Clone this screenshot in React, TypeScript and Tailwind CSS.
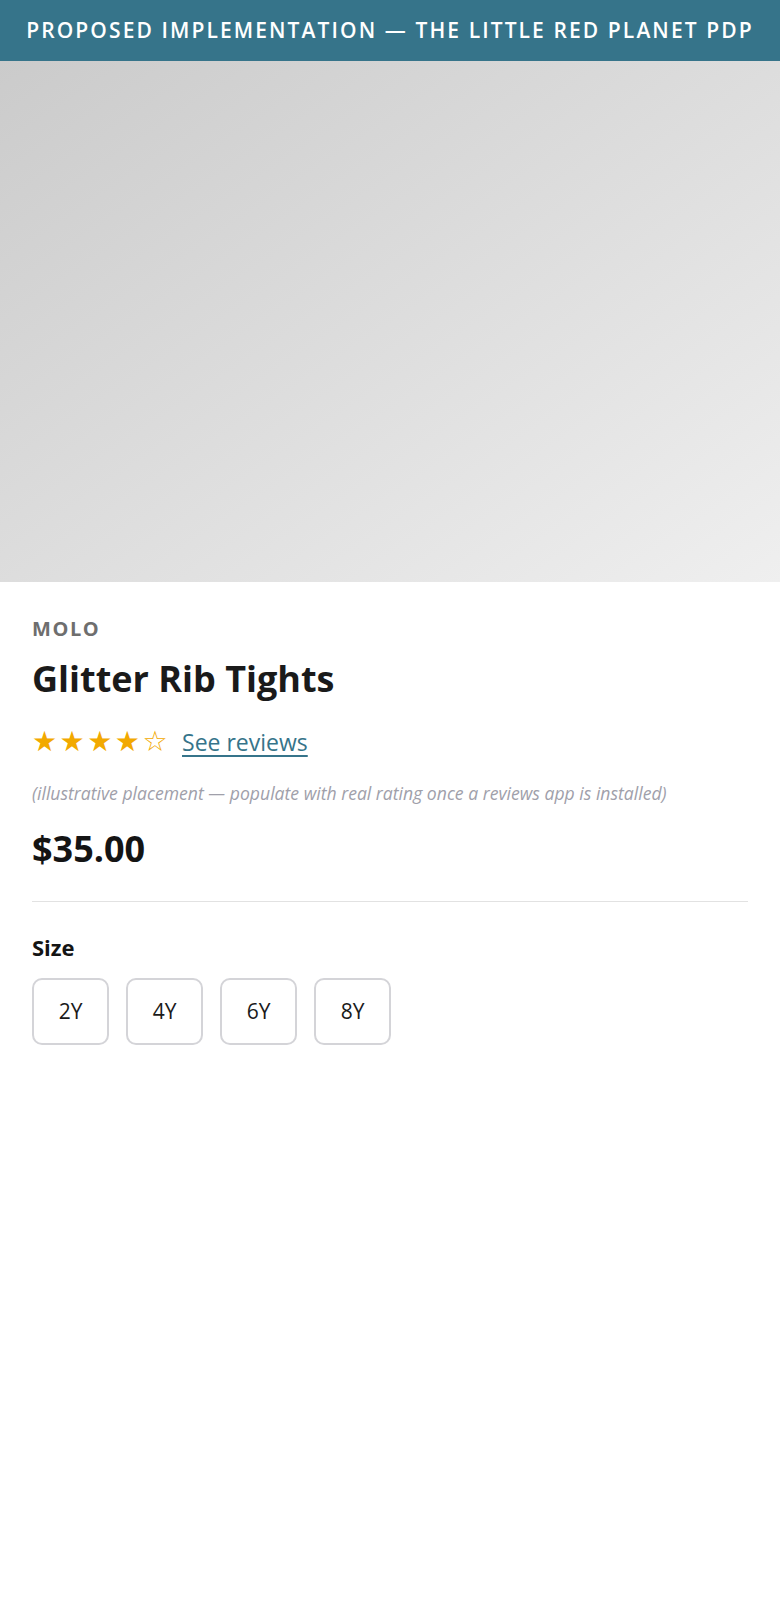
import React, { useState } from "react";

const sizes = ["2Y", "4Y", "6Y", "8Y"];

const App = () => {
  const [selected, setSelected] = useState<string | null>(null);

  return (
    <div className="min-h-[1600px] bg-white font-['Open_Sans',sans-serif] text-[#1a1a1a]">
      {/* Faixa do topo */}
      <header className="flex h-[61px] items-center justify-center bg-[#36748a]">
        <h1 className="text-[21px] font-semibold uppercase tracking-[0.1em] text-white">
          Proposed implementation — The Little Red Planet PDP
        </h1>
      </header>

      {/* Placeholder da foto do produto */}
      <div className="h-[521px] w-full bg-gradient-to-br from-[#cbcbcb] to-[#efefef]" />

      <section className="px-8 pt-[34px]">
        <p className="text-[20px] leading-[26px] font-bold uppercase tracking-[0.08em] text-[#6e6e6e]">
          Molo
        </p>
        <h2 className="mt-[15px] text-[36px] leading-[44px] font-bold text-[#1a1a1a]">
          Glitter Rib Tights
        </h2>

        <div className="mt-[26px] flex items-center gap-[12px]">
          <span className="font-['DejaVu_Sans',sans-serif] text-[28px] leading-[30px] tracking-[2.5px] text-[#f2a900]">
            ★★★★☆
          </span>
          <a
            href="#reviews"
            className="text-[23px] leading-[30px] text-[#36748a] underline underline-offset-[4px]"
          >
            See reviews
          </a>
        </div>

        <p className="mt-[24px] text-[17.6px] leading-[24px] italic text-[#a0a0aa]">
          (illustrative placement — populate with real rating once a reviews app is installed)
        </p>

        <p className="mt-[21px] text-[36px] leading-[46px] font-bold text-[#141414]">$35.00</p>

        <hr className="mt-[29px] border-t border-[#e2e2e2]" />

        <h3 className="mt-[31px] text-[22px] leading-[28px] font-bold text-[#141414]">Size</h3>
        <div className="mt-[17px] flex gap-[17px]">
          {sizes.map((s) => (
            <button
              key={s}
              onClick={() => setSelected(s)}
              className={
                selected === s
                  ? "flex h-[67px] w-[77px] items-center justify-center rounded-[10px] border-2 border-[#36748a] text-[21px] text-[#1a1a1a]"
                  : "flex h-[67px] w-[77px] items-center justify-center rounded-[10px] border-2 border-[#d4d4d8] text-[21px] text-[#1a1a1a]"
              }
            >
              {s}
            </button>
          ))}
        </div>
      </section>
    </div>
  );
};

export default App;
